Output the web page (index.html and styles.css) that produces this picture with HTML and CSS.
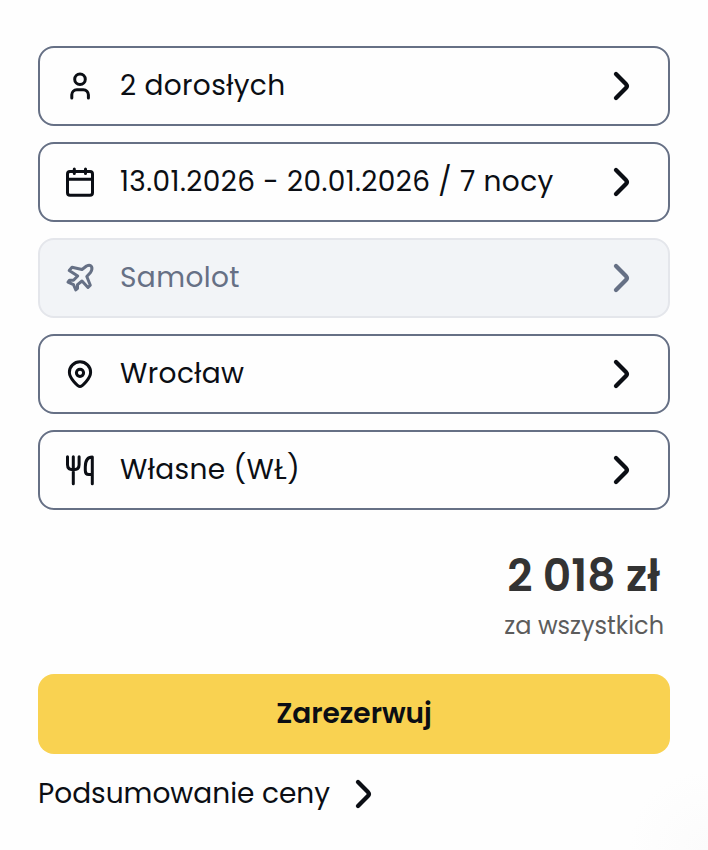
FILE: index.html
```html
<!DOCTYPE html>
<html lang="pl">
<head>
    <meta charset="UTF-8">
    <meta name="viewport" content="width=device-width, initial-scale=1.0">
    <title>Rezerwacja</title>
    <link rel="stylesheet" href="styles.css">
</head>
<body>
    <svg class="sprite" aria-hidden="true">
        <symbol id="chevron" viewBox="0 0 32 32">
            <path d="M10 4l9.700 9.700q2.300 2.300 0 4.600L10 28"/>
        </symbol>
    </svg>

    <div class="booking">
        <div class="options">
            <button class="option" type="button">
                <svg class="icon" viewBox="0 0 32 32"><circle cx="16" cy="9.200" r="5.300"/><path d="M7.800 28v-3.200a5 5 0 0 1 5-5h6.600a5 5 0 0 1 5 5V28"/></svg>
                <span class="label">2 dorosłych</span>
                <svg class="chevron"><use href="#chevron"/></svg>
            </button>
            <button class="option" type="button">
                <svg class="icon" viewBox="0 0 32 32"><rect x="3.500" y="5.500" width="25" height="23.700" rx="2.500"/><path d="M4 13.300h24M10.300 3v4.500M21.500 3v4.500"/></svg>
                <span class="label">13.01.2026 - 20.01.2026 / 7 nocy</span>
                <svg class="chevron"><use href="#chevron"/></svg>
            </button>
            <button class="option" type="button" disabled>
                <svg class="icon" viewBox="0 0 32 32"><path d="M5.200 8.500L8 5.300l10 2.200 4.500-3.500q3.500-1.700 5 .5 1.300 2.500-1 6L22.800 14.500l3.500 8.700L24 25.500l-6-6.500-4.500 3.700v3.800l-1.700 1.500-2.300-5.300-5.500-2.500 1.500-2h4l4.200-4.200z"/></svg>
                <span class="label">Samolot</span>
                <svg class="chevron"><use href="#chevron"/></svg>
            </button>
            <button class="option" type="button">
                <svg class="icon" viewBox="0 0 32 32"><path d="M16 28.500c-2 0-10.600-8-10.600-14.300a10.600 10.400 0 0 1 21.200 0c0 6.300-8.600 14.300-10.600 14.300z"/><circle cx="16" cy="14.800" r="3.600"/></svg>
                <span class="label">Wrocław</span>
                <svg class="chevron"><use href="#chevron"/></svg>
            </button>
            <button class="option" type="button">
                <svg class="icon" viewBox="0 0 32 32"><path d="M3.500 2.700v8q0 5 5.800 5t5.800-5v-8M9.300 2.700v27M28.300 29.700V2.900c-5 0-7 4.500-7 10v3.600q0 4 3.500 4h3.500"/></svg>
                <span class="label">Własne (WŁ)</span>
                <svg class="chevron"><use href="#chevron"/></svg>
            </button>
        </div>

        <div class="price">
            <strong class="amount">2 018 zł</strong>
            <span class="note">za wszystkich</span>
        </div>

        <button class="reserve" type="button">Zarezerwuj</button>

        <a class="summary">
            <span>Podsumowanie ceny</span>
            <svg class="chevron"><use href="#chevron"/></svg>
        </a>
    </div>
</body>
</html>
```
FILE: styles.css
```css
* {
    box-sizing: border-box;
}
body {
    margin: 0;
    min-height: 850px;
    background: radial-gradient(circle at 100% 100%, #fbfbfb, #fefefe 80px);
    color: #0b0e14;
    font-family: Poppins, Inter, sans-serif;
    font-size: 28px;
}
.sprite {
    position: absolute;
    width: 0;
    height: 0;
}
.booking {
    padding: 46px 38px 0;
}
.options {
    display: flex;
    flex-direction: column;
    gap: 16px;
}
.option {
    display: flex;
    align-items: center;
    width: 100%;
    height: 80px;
    padding: 0 30px 0 24px;
    border: 2px solid #667085;
    border-radius: 16px;
    background: #fefefe;
    color: inherit;
    font: inherit;
    letter-spacing: 0.4px;
    text-align: left;
    cursor: pointer;
}
.option:disabled {
    border-color: #e4e6eb;
    background: #f2f4f7;
    color: #667085;
    cursor: default;
}
.icon,
.chevron {
    width: 32px;
    height: 32px;
    flex: none;
    fill: none;
    stroke: currentColor;
    stroke-width: 3;
    stroke-linecap: round;
    stroke-linejoin: round;
}
.chevron {
    stroke-width: 4.3;
}
.label {
    flex: 1;
    margin-left: 24px;
    white-space: nowrap;
}
.price {
    display: flex;
    flex-direction: column;
    align-items: flex-end;
    height: 164px;
    padding: 40px 6px 0 0;
}
.amount {
    margin-right: 4px;
    color: #333;
    font-size: 44px;
    font-weight: 600;
    line-height: 52px;
}
.note {
    margin-top: 8px;
    color: #5c5c5c;
    font-size: 24px;
    line-height: 32px;
}
.reserve {
    display: block;
    width: 100%;
    height: 80px;
    border: 0;
    border-radius: 16px;
    background: #f9d251;
    color: inherit;
    font: inherit;
    font-weight: 600;
    cursor: pointer;
}
.summary {
    display: flex;
    align-items: center;
    gap: 18px;
    height: 80px;
    cursor: pointer;
}
```
